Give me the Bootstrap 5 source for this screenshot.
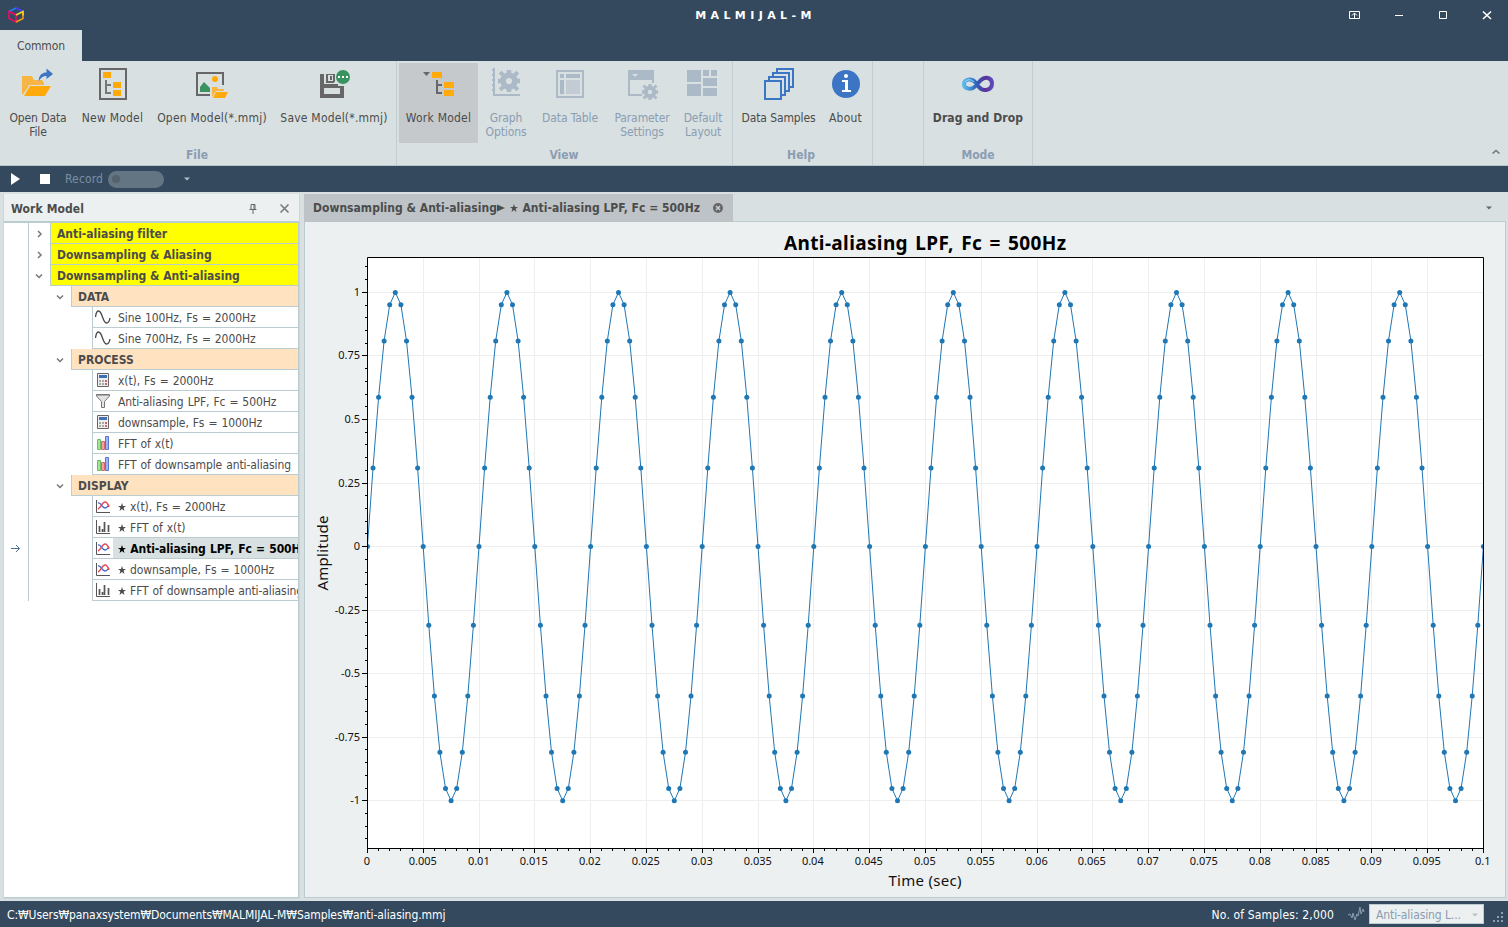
<!DOCTYPE html>
<html lang="en">
<head>
    <meta charset="UTF-8">
    <meta name="viewport" content="width=device-width, initial-scale=1.0">
    <title>MALMIJAL-M</title>
    <!-- Bootstrap CSS -->
    <link href="https://cdn.jsdelivr.net/npm/bootstrap@5.3.0/dist/css/bootstrap.min.css" rel="stylesheet">
    <style>
        :root {
            --dark: #34495e;
            --face: #d8e0e1;
            --light: #ecf0f1;
            --line: #bccdd2;
            --off: #8b9db2;
        }
        body {
            width: 1508px;
            height: 927px;
            overflow: hidden;
            background: var(--face);
            color: #4c4c4c;
            font-family: 'DejaVu Sans Condensed', 'DejaVu Sans', sans-serif;
            font-stretch: condensed;
            font-size: 12px;
            line-height: 14px;
            letter-spacing: -0.1px;
        }
        svg { display: block; flex: none; }
        b, .fw-bold { letter-spacing: 0.1px; }

        /* Title bar and ribbon */
        .title-bar { height: 30px; background: var(--dark); color: #fff; }
        .title-side { width: 200px; }
        .title-text { font-family: 'DejaVu Sans', sans-serif; font-stretch: normal; font-size: 11px; letter-spacing: 4.4px; font-weight: bold; padding: 1px 0 0 3px; }
        .tab-strip { height: 31px; background: var(--dark); }
        .tab-strip .nav-link { width: 82px; height: 31px; padding: 9px 0 0; background: var(--face); color: #4c4c4c; text-align: center; }
        .ribbon { height: 105px; border-bottom: 1px solid #b5c5ca; }
        .ribbon-group { height: 104px; padding-top: 2px; border-right: 1px solid #c0ced2; }
        .ribbon-group footer { margin-top: 5px; text-align: center; color: var(--off); font-weight: bold; letter-spacing: 0; }
        .tool { display: flex; flex-direction: column; justify-content: flex-start; align-items: center; height: 80px; padding: 5px 0 0; border: 0; background: none; color: inherit; letter-spacing: inherit; flex: none; }
        .tool svg { margin-bottom: 11px; }
        .tool span { display: block; white-space: nowrap; }
        .tool.off { color: var(--off); }
        .tool.pressed { background: #c5c9cb; }
        .tool.airy { letter-spacing: 0.22px; }
        .w50 { width: 50px; } .w53 { width: 53px; } .w56 { width: 56px; } .w70 { width: 70px; } .w72 { width: 72px; }
        .w79 { width: 79px; } .w81 { width: 81px; } .w108 { width: 108px; } .w120 { width: 120px; } .w124 { width: 124px; }
        .group-file { width: 397px; padding-left: 3px; padding-right: 5px; }
        .group-view { width: 336px; padding-left: 2px; padding-right: 3px; }
        .group-help { width: 140px; padding-left: 5px; padding-right: 8px; }
        .group-blank { width: 51px; }
        .group-mode { width: 109px; }
        .collapse-arrow { margin: 88px 8px 0 auto; }

        /* Run bar */
        .run-bar { height: 26px; background: var(--dark); color: #7b8fa2; padding-left: 11px; }
        .run-stop { margin-left: 19px; }
        .run-label { width: 38px; margin: 0 5px 0 15px; letter-spacing: 0.15px; }
        .run-more { margin-left: 20px; }
        .record-switch { width: 56px; height: 17px; border-radius: 9px; background: #637482; padding: 4px; }
        .record-switch i { display: block; width: 8px; height: 8px; border-radius: 50%; background: #54626e; }

        /* Work area */
        .work { height: 709px; }
        .dock { width: 297px; height: 705px; margin: 2px 0 0 3px; border: 1px solid #cad7da; border-top: 0; padding-top: 1px; background: var(--light); }
        .dock-head { height: 27px; padding: 1px 10px 0 7px; border-bottom: 1px solid var(--line); }
        .dock-pin { margin-right: 23px; }
        .tree { height: 676px; border: 1px solid var(--line); border-left-width: 0; background: #fff; overflow: hidden; }
        .tree-row { height: 21px; white-space: nowrap; }
        .pointer { width: 25px; height: 21px; border-right: 1px solid var(--line); flex: none; }
        .twist { width: 21px; flex: none; }
        .pad-1 { width: 21px; flex: none; }
        .pad-2 { width: 63px; flex: none; }
        .node { flex: 1; min-width: 0; height: 21px; overflow: hidden; padding: 4px 0 0 6px; border-left: 1px solid var(--line); border-bottom: 1px solid var(--line); }
        .node.root { background: #ff0; font-weight: bold; letter-spacing: -0.02px; }
        .node.kind { background: #ffe2c0; font-weight: bold; letter-spacing: 0; }
        .node.leaf { display: flex; align-items: center; padding: 0 0 0 2px; word-spacing: 0.7px; }
        .node.leaf span { flex: 1; height: 20px; margin-left: 2px; padding: 4px 0 0 5px; overflow: hidden; }
        .node.current span { background: var(--face); color: #000; font-weight: bold; letter-spacing: -0.12px; }
        .inline-mark { display: inline; vertical-align: baseline; }
        .document { width: 1202px; margin: 2px 0 0 4px; height: 704px; }
        .doc-tabs { height: 28px; }
        .doc-tab { width: 429px; height: 28px; padding: 0 10px 0 9px; background: #bdc3c7; font-weight: bold; letter-spacing: 0.02px; white-space: nowrap; }
        .doc-rest { height: 28px; border-bottom: 1px solid var(--line); padding-right: 14px; flex: 1; }
        .doc-body { height: 676px; border: 1px solid var(--line); border-top: 0; background: var(--light); }

        /* Chart */
        .chart text { font-family: 'Noto Sans', sans-serif; font-stretch: normal; fill: #111; letter-spacing: 0; }
        .chart .num { font-size: 11px; }
        .chart .axis-name { font-size: 15px; }
        .chart .head { font-size: 19px; font-weight: bold; fill: #000; word-spacing: 2px; }

        /* Status bar */
        .status { height: 26px; background: var(--dark); color: #fff; padding-left: 7px; }
        .path-text { padding-top: 1px; letter-spacing: -0.08px; }
        .count-text { padding-top: 1px; letter-spacing: 0.15px; }
        .wave-mark { margin: 0 4px 0 14px; }
        .combo { width: 115px; height: 20px; background: var(--light); border: 1px solid #bccdd2; color: var(--off); padding: 1px 5px 0 6px; }
    </style>
</head>
<body>
    <!-- Title bar -->
    <header class="title-bar d-flex align-items-center justify-content-between">
        <div class="title-side ps-2">
            <svg width="16" height="16" viewBox="0 0 16 16" fill="none" stroke-width="1.5">
                <path d="M1 4.500 8 1l7 3.500" stroke="#1687ff"/><path d="M8 1l7 3.500L8 8" stroke="#4c35f0"/><path d="M1 4.500 8 8" stroke="#a724d8"/>
                <path d="M1 4.500v7L8 15V8z" stroke="#ee0c62"/><path d="M15 4.500v7L8 15" stroke="#f59a18"/><path d="M8 8l7-3.500v4" stroke="#f5d817"/>
            </svg>
        </div>
        <div class="title-text">MALMIJAL-M</div>
        <div class="title-side d-flex justify-content-end">
            <svg width="160" height="30" viewBox="1348 0 160 30" fill="none" stroke="#fff">
                <path d="M1349.500 11.500h10v7h-10zM1354.500 18v-5M1352 15.500l2.500-2.500 2.500 2.500M1395 15.500h8M1439.500 11.500h7v7h-7z"/>
                <path d="M1483 11.500l8 7.500M1491 11.500l-8 7.500" stroke-width="1.600"/>
            </svg>
        </div>
    </header>
    <nav class="tab-strip nav"><a class="nav-link" href="#">Common</a></nav>

    <!-- Ribbon -->
    <section class="ribbon d-flex">
        <div class="ribbon-group group-file">
            <div class="d-flex">
                <button class="tool w70">
                    <svg width="32" height="32"><path d="M0 8h10l2 4h8l2 3v3H8L0 27z" fill="#f7b643"/><path d="M7 17h23l-7 12H1z" fill="#d8e0e1"/><path d="M8 18h21l-6 10H2z" fill="#ffa90b"/><path d="M16.500 13.500C17 7 20 4.500 24.500 4.500V0.500l6.500 5.500-6.500 5V8c-3.500 0-5.500 1.500-8 5.500z" fill="#3b75c4"/></svg>
                    <span>Open Data</span><span>File</span>
                </button>
                <button class="tool w79 airy">
                    <svg width="32" height="32"><path d="M3 1h26v30H3z" fill="none" stroke="#676767" stroke-width="2"/><path d="M6 4h8v6H6zM16 14h8v6h-8zM16 22h8v6h-8z" fill="#ffa90b"/><path d="M9 12v13h5M9 17h5" fill="none" stroke="#777" stroke-width="2"/></svg>
                    <span>New Model</span>
                </button>
                <button class="tool w120 airy">
                    <svg width="32" height="32"><path d="M14 27H1V5h26v12" fill="none" stroke="#676767" stroke-width="2"/><circle cx="19" cy="11" r="3" fill="#ffa90b"/><path d="M4 24v-5l4-5 6 6v4z" fill="#39935f"/><path d="M16 19h5l1 2h6v2h-8l-4 6z" fill="#f7b643"/><path d="M20 24h12l-3 6H17z" fill="#ffa90b"/></svg>
                    <span>Open Model(*.mmj)</span>
                </button>
                <button class="tool w124 airy">
                    <svg width="32" height="32"><path d="M2 6h24v24H2z" fill="#676767"/><path d="M6 6h2v10H6zM6 15h20v1H6zM16 6h10v12h-6v-2h-4z" fill="#d8e0e1"/><path d="M8 6h9v8H8zM2 16h18v2h6v12H2z" fill="#676767"/><path d="M10 7h5v6h-5zM6 20h16v6H6z" fill="#d8e0e1"/><path d="M12 8h2v4h-2zM6 20h14v0H6z" fill="#676767"/><circle cx="25" cy="9" r="8" fill="#d8e0e1"/><circle cx="25" cy="9" r="7" fill="#39935f"/><path d="M20 8h2v2h-2zM24 8h2v2h-2zM28 8h2v2h-2z" fill="#fff"/></svg>
                    <span>Save Model(*.mmj)</span>
                </button>
            </div>
            <footer>File</footer>
        </div>
        <div class="ribbon-group group-view">
            <div class="d-flex">
                <button class="tool w79 pressed airy">
                    <svg width="32" height="32"><path d="M0 4h7l-3.500 4z" fill="#676767"/><path d="M9 4h10v6H9zM21 14h10v6H21zM21 22h10v6H21z" fill="#ffa90b"/><path d="M14 12v13h5M14 17h5" fill="none" stroke="#676767" stroke-width="2"/></svg>
                    <span>Work Model</span>
                </button>
                <button class="tool w56 off">
                    <svg width="32" height="32"><path d="M4 0v27h26M2 2h2M2 7h2M2 12h2M2 17h2M2 22h2" fill="none" stroke="#acb9c6" stroke-width="2"/><g transform="translate(19 13)"><use href="#gear"/></g></svg>
                    <span>Graph</span><span>Options</span>
                </button>
                <button class="tool w72 off">
                    <svg width="32" height="32"><path d="M3 3h26v26H3z" fill="none" stroke="#acb9c6" stroke-width="2"/><path d="M6 6h4v4H6zM12 6h14v4H12zM6 12h4v14H6z" fill="#acb9c6"/><path d="M12 12h14v14H12z" fill="#c3ccd4"/></svg>
                    <span>Data Table</span>
                </button>
                <button class="tool w72 off">
                    <svg width="32" height="32"><path d="M2 2h26v13h-2v-3H4v14h12v2H2z" fill="#acb9c6"/><path d="M6 6h6l-3 3z" fill="#d8e0e1"/><g transform="translate(24 24) scale(.73)"><use href="#gear"/></g></svg>
                    <span>Parameter</span><span>Settings</span>
                </button>
                <button class="tool w50 off">
                    <svg width="32" height="32" fill="#acb9c6"><path d="M0 2h14v12H0zM0 16h14v12H0zM16 2h6v6h-6zM24 2h6v6h-6zM16 10h14v8H16zM16 20h14v8H16z"/></svg>
                    <span>Default</span><span>Layout</span>
                </button>
            </div>
            <footer>View</footer>
        </div>
        <div class="ribbon-group group-help">
            <div class="d-flex">
                <button class="tool w81">
                    <svg width="32" height="32" fill="#d8e0e1" stroke="#3b75c4" stroke-width="2"><path d="M14 1h16v18H14z"/><path d="M10 5h16v18H10z"/><path d="M6 9h16v18H6z"/><path d="M2 13h16v18H2z"/></svg>
                    <span>Data Samples</span>
                </button>
                <button class="tool w53 airy">
                    <svg width="32" height="32"><circle cx="16" cy="16" r="14" fill="#3b75c4"/><circle cx="16" cy="8" r="2" fill="#fff"/><path d="M12 12h6v10h3v2h-9v-2h3v-8h-3z" fill="#fff"/></svg>
                    <span>About</span>
                </button>
            </div>
            <footer>Help</footer>
        </div>
        <div class="ribbon-group group-blank"></div>
        <div class="ribbon-group group-mode">
            <button class="tool w108">
                <svg width="32" height="32" fill="none">
                    <defs>
                        <linearGradient id="loop" x1="0" x2="1"><stop offset="0" stop-color="#57baf0"/><stop offset=".45" stop-color="#2f62b8"/><stop offset=".75" stop-color="#5a3298"/><stop offset="1" stop-color="#5d4ab8"/></linearGradient>
                    </defs>
                    <path d="M13 18.500C10 22 2 21.500 2 16s8-5.500 11-2l4 5c4 5 13 3.500 13-3.500 0-6-7-7.500-11-3.500l-6 6.500" stroke="url(#loop)" stroke-width="4"/>
                    <path d="M3 14c2-3 6-3 9 0" stroke="#a0dcf8"/>
                </svg>
                <span class="fw-bold">Drag and Drop</span>
            </button>
            <footer>Mode</footer>
        </div>
        <svg class="collapse-arrow" width="8" height="5"><path d="M0.500 4.500 4 1.500l3.500 3" fill="none" stroke="#777" stroke-width="1.500"/></svg>
    </section>

    <!-- Run bar -->
    <section class="run-bar d-flex align-items-center">
        <svg width="10" height="12"><path d="M0 0l9 6-9 6z" fill="#fff"/></svg>
        <svg class="run-stop" width="10" height="10"><path d="M0 0h10v10H0z" fill="#fff"/></svg>
        <span class="run-label">Record</span>
        <div class="record-switch"><i></i></div>
        <svg class="run-more" width="6" height="4"><path d="M0 .5h6l-3 3z" fill="#b3bdc6"/></svg>
    </section>

    <main class="work d-flex">
        <!-- Work model tree -->
        <aside class="dock">
            <div class="dock-head d-flex align-items-center">
                <b class="me-auto">Work Model</b>
                <svg class="dock-pin" width="8" height="10"><path d="M2 .5h4v5H2zM5 0v6M.5 5.500h7M4 6v4" fill="none" stroke="#666"/></svg>
                <svg width="9" height="9"><path d="M.5.5l8 8M8.500.5l-8 8" stroke="#777" stroke-width="1.500"/></svg>
            </div>
            <div class="tree" id="tree"></div>
        </aside>

        <!-- Document -->
        <section class="document">
            <div class="doc-tabs d-flex">
                <div class="doc-tab d-flex align-items-center justify-content-between">
                    <span>Downsampling &amp; Anti-aliasing<svg class="inline-mark" width="9" height="8"><path d="M0 .5l8 3.500-8 3.500z" fill="#4c4c4c"/></svg> <svg class="inline-mark" width="9" height="8"><use href="#star"/></svg> Anti-aliasing LPF, Fc = 500Hz</span>
                    <svg width="10" height="10"><circle cx="5" cy="5" r="5" fill="#666"/><path d="M3 3l4 4M7 3l-4 4" stroke="#d0d4d6" stroke-width="1.300"/></svg>
                </div>
                <div class="doc-rest d-flex align-items-center justify-content-end">
                    <svg width="6" height="4"><path d="M0 .5h6l-3 3z" fill="#666"/></svg>
                </div>
            </div>
            <div class="doc-body"><svg class="chart" id="chart" width="1200" height="675" viewBox="305 222 1200 675"></svg></div>
        </section>
    </main>

    <!-- Status bar -->
    <footer class="status d-flex align-items-center">
        <span class="me-auto path-text">C:₩Users₩panaxsystem₩Documents₩MALMIJAL-M₩Samples₩anti-aliasing.mmj</span>
        <span class="count-text">No. of Samples: 2,000</span>
        <svg class="wave-mark" width="17" height="14"><path d="M0 8l2-1 2 4 1-5 2 7 2-6 1 2 2-9 1 7 2-5 1 3" fill="none" stroke="#8b9db2"/></svg>
        <div class="combo d-flex align-items-center justify-content-between"><span>Anti-aliasing L...</span><svg width="6" height="4"><path d="M0 .5h6l-3 3z" fill="#b9c0c6"/></svg></div>
        <svg width="24" height="26" fill="#8b9db2"><path d="M17 11h2v2h-2zM13 15h2v2h-2zM17 15h2v2h-2zM9 19h2v2H9zM13 19h2v2h-2zM17 19h2v2h-2z"/></svg>
    </footer>

    <!-- Shared shapes -->
    <svg width="0" height="0">
        <defs>
            <g id="gear" fill="none" stroke="#acb9c6">
                <circle r="5.900" stroke-width="5.600"/>
                <path d="M0-11v3M0 11v-3M-11 0h3M11 0h-3" stroke-width="4.500"/>
                <path d="M-8.800-8.800l3 3M8.800-8.800l-3 3M-8.800 8.800l3-3M8.800 8.800l-3-3" stroke-width="4"/>
            </g>
            <path id="star" d="M4 0l1 3h3L5.600 4.800 6.500 8 4 6 1.500 8l.9-3.200L0 3h3z" fill="currentColor"/>
            <g id="i-sine" fill="none" stroke="#444" stroke-width="1.300"><path d="M.5 8C1 4 2 2 3.500 2c4 0 4 12 8 12 2 0 3-2 3.500-5"/></g>
            <g id="i-calc"><path d="M2.500 1.500h11v13h-11z" fill="#eee" stroke="#666"/><path d="M4 3h8v3H4z" fill="#3f6fb5"/><path d="M4 8h2v2H4zM7 8h2v2H7zM4 11h2v2H4zM7 11h2v2H7z" fill="#aaa"/><path d="M10 8h2v2h-2z" fill="#c66"/><path d="M10 11h2v2h-2z" fill="#c66"/></g>
            <g id="i-funnel"><path d="M1.500 1.500h13v1.500L9.500 8.500v6h-3v-6L1.500 3z" fill="#e4e4e4" stroke="#777"/><path d="M2 2.500h12" stroke="#aaa"/></g>
            <g id="i-bars"><path d="M2.500 4.500h3v10h-3z" fill="#a5e39a" stroke="#6cba62"/><path d="M6.500 6.500h3v8h-3z" fill="#f4a0a0" stroke="#d06a6a"/><path d="M10.500 1.500h3v13h-3z" fill="#9fb4f4" stroke="#5c76d2"/></g>
            <g id="i-plot" fill="none"><path d="M1.500 2v12.500H15" stroke="#555"/><path d="M3 5c3-1 4 5 7 5 2 0 3-2 4-3" stroke="#3569d0" stroke-width="1.400"/><path d="M3 11c3-1 4-7 7-7 2 0 3 2 4 5" stroke="#e34c5b" stroke-width="1.500"/></g>
            <g id="i-hist" fill="none" stroke="#555"><path d="M1.500 1v13.500H15"/><path d="M4.500 7v6M7.500 10v3M9.500 3v10M13.500 6v7" stroke-width="1.700"/></g>
        </defs>
    </svg>

    <!-- Bootstrap JS -->
    <script src="https://cdn.jsdelivr.net/npm/bootstrap@5.3.0/dist/js/bootstrap.bundle.min.js"></script>
    <script>
        const star = '<svg class="inline-mark" width="8" height="8"><use href="#star"/></svg> ';
        const nodes = [
            ['root', 'Anti-aliasing filter', false],
            ['root', 'Downsampling &amp; Aliasing', false],
            ['root', 'Downsampling &amp; Anti-aliasing', true],
            ['kind', 'DATA', true],
            ['leaf', 'Sine 100Hz, Fs = 2000Hz', 'sine'],
            ['leaf', 'Sine 700Hz, Fs = 2000Hz', 'sine'],
            ['kind', 'PROCESS', true],
            ['leaf', 'x(t), Fs = 2000Hz', 'calc'],
            ['leaf', 'Anti-aliasing LPF, Fc = 500Hz', 'funnel'],
            ['leaf', 'downsample, Fs = 1000Hz', 'calc'],
            ['leaf', 'FFT of x(t)', 'bars'],
            ['leaf', 'FFT of downsample anti-aliasing', 'bars'],
            ['kind', 'DISPLAY', true],
            ['leaf', star + 'x(t), Fs = 2000Hz', 'plot'],
            ['leaf', star + 'FFT of x(t)', 'hist'],
            ['leaf current', star + 'Anti-aliasing LPF, Fc = 500Hz', 'plot'],
            ['leaf', star + 'downsample, Fs = 1000Hz', 'plot'],
            ['leaf', star + 'FFT of downsample anti-aliasing', 'hist']
        ];

        function loadTree() {
            let html = '';
            nodes.forEach(([type, label, extra]) => {
                const leaf = type.startsWith('leaf');
                const arrow = type.includes('current')
                    ? '<svg width="24" height="20"><path d="M7 10.500h8.500M12 7l3.500 3.500L12 14" fill="none" stroke="#4f6f94"/></svg>' : '';
                const twist = '<div class="twist"><svg width="21" height="20"><path d="' +
                    (extra === true ? 'M7 9.500l3 3 3-3' : 'M9 8l3 3-3 3') + '" fill="none" stroke="#777" stroke-width="1.500"/></svg></div>';
                html += '<div class="tree-row d-flex"><div class="pointer">' + arrow + '</div>';
                if (leaf) {
                    html += '<div class="pad-2"></div><div class="node ' + type + '"><svg width="16" height="16"><use href="#i-' + extra + '"/></svg><span>' + label + '</span></div>';
                } else {
                    html += (type === 'kind' ? '<div class="pad-1"></div>' : '') + twist + '<div class="node ' + type + '">' + label + '</div>';
                }
                html += '</div>';
            });
            document.getElementById('tree').innerHTML = html;
        }

        function drawChart() {
            const left = 367, right = 1483, top = 257, bottom = 848;
            const px = t => left + 0.4 + t * 11160;
            const py = v => 546.6 - v * 254.2;
            const snap = n => Math.floor(n) + 0.5;
            let grid = '', ticks = '', text = '', line = '', dots = '';

            for (let i = 0; i <= 100; i++) {
                const x = snap(px(i / 1000));
                if (i % 5 === 0) {
                    grid += `M${x} ${top}V${bottom}`;
                    text += `<text class="num" x="${x - 0.7}" y="865" text-anchor="middle">${i / 1000}</text>`;
                }
                ticks += `M${x} ${bottom}v${i % 5 === 0 ? 5 : 3}`;
            }
            for (let i = -23; i <= 22; i++) {
                const y = snap(py(i / 20));
                if (i % 5 === 0) {
                    grid += `M${left} ${y}H${right}`;
                    text += `<text class="num" x="360" y="${y + 3.5}" text-anchor="end">${i / 20}</text>`;
                }
                ticks += `M${left} ${y}h${i % 5 === 0 ? -5 : -2}`;
            }
            for (let i = 0; i <= 200; i++) {
                const x = px(i / 2000).toFixed(1);
                const y = py(Math.sin(i * Math.PI / 10)).toFixed(1);
                line += (i ? 'L' : 'M') + x + ' ' + y;
                dots += `<circle cx="${x}" cy="${y}" r="2.500"/>`;
            }
            document.getElementById('chart').innerHTML = `
                <clipPath id="plot"><path d="M${left} ${top}H${right + 1}V${bottom}H${left}z"/></clipPath>
                <path d="M${left} ${top}H${right}V${bottom}H${left}z" fill="#fff"/>
                <path d="${grid}" stroke="#eee"/>
                <g clip-path="url(#plot)" fill="#1f77b4"><path d="${line}" fill="none" stroke="#1f77b4"/>${dots}</g>
                <path d="M367.500 257.500H1483.500V848.500H367.500z${ticks}" fill="none" stroke="#000"/>
                ${text}
                <text class="head" x="925" y="250" text-anchor="middle" textLength="282">Anti-aliasing LPF, Fc = 500Hz</text>
                <text class="axis-name" x="925" y="886" text-anchor="middle" textLength="73">Time (sec)</text>
                <text class="axis-name" transform="translate(328 553) rotate(-90)" text-anchor="middle" textLength="75">Amplitude</text>`;
        }

        document.addEventListener('DOMContentLoaded', () => {
            loadTree();
            drawChart();
        });
    </script>
</body>
</html>
